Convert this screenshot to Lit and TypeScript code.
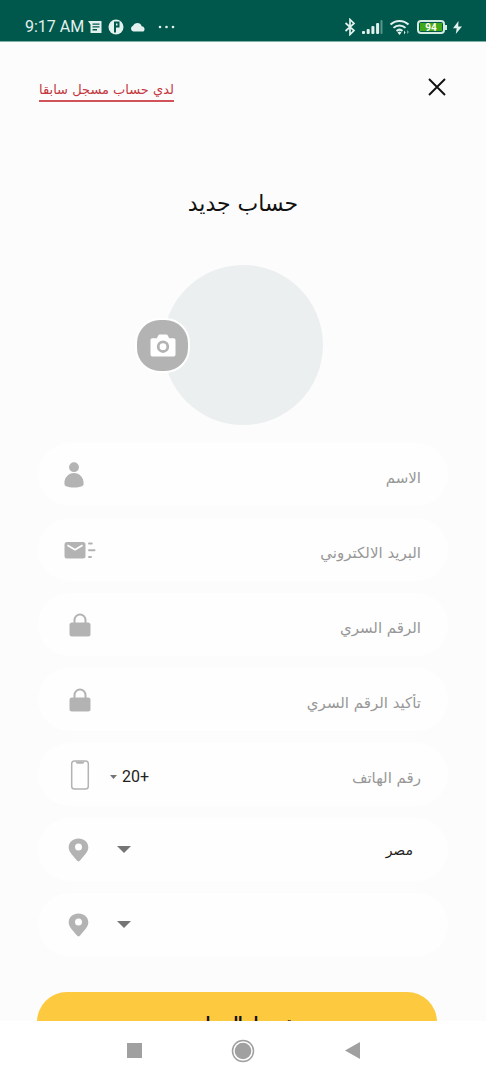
import { LitElement, html, css, svg } from "lit";
import { customElement, state } from "lit/decorators.js";

const icons = {
  person: html`<svg width="32" height="26" viewBox="0 0 32 26" aria-hidden="true">
    <circle cx="10" cy="5.2" r="4.9" />
    <path d="M10 11c5.600 0 9.600 4.500 9.600 10 0 2.200-.4 2.700-1.700 3.200-2.200.9-5 1.300-7.900 1.300s-5.700-.4-7.900-1.300C.8 23.700.4 23.200.4 21 .4 15.500 4.400 11 10 11z" />
  </svg>`,
  mail: html`<svg width="32" height="18" viewBox="0 0 32 18" aria-hidden="true">
    <rect x="0.500" y="1" width="21" height="16.500" rx="2.500" />
    <path d="M3.500 4.300 11 8.800l7.500-4.500" fill="none" stroke="#fff" stroke-width="1.800" />
    <path d="M25 2.500h2.800M25 9.200h5.500M25 16h2" fill="none" stroke="#b3b3b3" stroke-width="2" stroke-linecap="round" />
  </svg>`,
  lock: html`<svg width="32" height="24" viewBox="0 0 32 24" aria-hidden="true">
    <rect x="5.500" y="9.500" width="21" height="14" rx="2.500" />
    <path d="M10.500 10V7.200a5.500 5.700 0 0 1 11 0V10" fill="none" stroke="#b3b3b3" stroke-width="2" />
  </svg>`,
  phone: html`<svg width="32" height="32" viewBox="0 0 32 32" aria-hidden="true">
    <rect x="7.700" y="2" width="16.600" height="28" rx="2.800" fill="none" stroke="#b3b3b3" stroke-width="1.500" />
    <path d="M11.500 2.500c.5 1.800 1 2.200 2.200 2.200h4.600c1.200 0 1.700-.4 2.200-2.200z" />
  </svg>`,
  pin: html`<svg width="32" height="24" viewBox="0 0 32 24" aria-hidden="true">
    <path fill-rule="evenodd" d="M14.500.6c5.500 0 9.800 3.900 9.800 8.800 0 4.200-3.800 7.300-7.800 12.700-1.400 1.900-2.600 1.900-4 0C8.500 16.700 4.700 13.600 4.700 9.400c0-4.900 4.300-8.800 9.800-8.800zm0 4.900a3.500 3.500 0 1 0 0 7 3.500 3.500 0 0 0 0-7z" />
  </svg>`,
};

const caret = (w: number, h: number) => html`<svg class="caret" width=${w} height=${h} viewBox="0 0 12 6" preserveAspectRatio="none" aria-hidden="true">
  <path d="M0 0h12L6 6z" />
</svg>`;

@customElement("phone-status-bar")
class PhoneStatusBar extends LitElement {
  static styles = css`
    :host {
      display: flex;
      justify-content: space-between;
      align-items: center;
      box-sizing: border-box;
      height: 42px;
      padding: 13px 24px 0 25px;
      background: #00574b;
      border-bottom: 1px solid #7fb0a8;
      color: #e2f1ee;
      fill: currentColor;
      font: 16px/20px Roboto, sans-serif;
    }
    .group { display: flex; align-items: center; gap: 6px; }
    .left { gap: 4px; }
    .battery {
      display: flex;
      align-items: center;
    }
    .cell {
      box-sizing: border-box;
      width: 28px;
      height: 14px;
      padding: 1px;
      border: 2px solid #d3ebe0;
      border-radius: 4px;
      background: #00574b;
    }
    .level {
      display: block;
      height: 8px;
      background: #43a818;
      color: #fff;
      font: bold 10px/9px Roboto, sans-serif;
      text-align: center;
    }
    .tip { width: 2px; height: 5px; background: #d3ebe0; }
  `;

  render() {
    return html`
      <div class="group left">
        <span>9:17 AM</span>
        <svg width="15" height="12" viewBox="0 0 15 12"><path fill-rule="evenodd" d="M0 0h13.500v12H2.500V3.500zM4.500 2.500v1.300h7V2.500zm0 2.800v1.300h7V5.300zm0 2.800v1.300h4.500V8.100z" /></svg>
        <svg width="19" height="16" viewBox="-1 0 19 16"><circle cx="8" cy="8" r="7.500" /><path d="M7 2.500v11M7 3.500h3.500v4H7" fill="none" stroke="#00574b" stroke-width="2" /><path d="M3 3.500h3v5H3z" opacity=".5" /></svg>
        <svg width="16" height="10" viewBox="0 0 16 10"><path d="M3.200 9.500a3 3 0 0 1-.3-5.700A4.800 4.800 0 0 1 11.700 4.200 3 3 0 0 1 13.500 9.500z" /></svg>
        <svg width="32" height="4" viewBox="0 0 32 4"><circle cx="10" cy="2" r="1.300" /><circle cx="16.500" cy="2" r="1.300" /><circle cx="23" cy="2" r="1.300" /></svg>
      </div>
      <div class="group">
        <svg width="12" height="18" viewBox="0 0 12 18"><path d="M1.500 5 10 12.500 6 16.500V1.500l4 4L1.500 13" fill="none" stroke="currentColor" stroke-width="1.700" /></svg>
        <svg width="21" height="14" viewBox="0 0 21 14">
          ${[3, 5, 8, 11].map((h, i) => svg`<rect x=${i * 4.700} y=${14 - h} width="3" height=${h} rx="1" />`)}
          <rect x="18.500" y="0" width="2" height="14" rx="1" opacity=".4" />
        </svg>
        <svg width="22" height="16" viewBox="0 0 22 16">
          <path d="M1.500 5.500a13 13 0 0 1 18 0M4.500 8.900a8.700 8.700 0 0 1 12 0M7.500 12a4.500 4.500 0 0 1 6 0" fill="none" stroke="currentColor" stroke-width="2" />
          <path d="M8.500 13.500 10.500 16l2-2.500a3 3 0 0 0-4 0zM15 11.500l1.500 2-1.500 2zM18.500 11l1 2-1 2z" />
        </svg>
        <span class="battery"><span class="cell"><span class="level">94</span></span><span class="tip"></span></span>
        <svg width="9" height="13" viewBox="0 0 9 13"><path d="M5.500 0 0 7.300h3.700L2.800 13 9 5.500H5.200z" /></svg>
      </div>
    `;
  }
}

@customElement("phone-nav-bar")
class PhoneNavBar extends LitElement {
  static styles = css`
    :host {
      display: flex;
      justify-content: center;
      align-items: center;
      gap: 84px;
      height: 59px;
      background: #fff;
    }
    button {
      display: flex;
      justify-content: center;
      align-items: center;
      width: 25px;
      height: 25px;
      padding: 0;
      border: 0;
      background: none;
      fill: #a0a0a0;
    }
  `;

  render() {
    return html`
      <button aria-label="Recents"><svg width="15" height="15" viewBox="0 0 15 15"><rect width="15" height="15" /></svg></button>
      <button aria-label="Home"><svg width="24" height="24" viewBox="0 0 24 24"><circle cx="12" cy="12" r="10.500" fill="none" stroke="#a0a0a0" stroke-width="1.500" /><circle cx="12" cy="12" r="8.300" /></svg></button>
      <button aria-label="Back"><svg width="15" height="17" viewBox="0 0 15 17"><path d="M0 8.500 15 0v17z" /></svg></button>
    `;
  }
}

@customElement("app-root")
class AppRoot extends LitElement {
  @state() private country = "eg";

  static styles = css`
    :host {
      display: flex;
      flex-direction: column;
      height: 100vh;
      background: #fcfcfc;
      color: #111;
      font-family: "DejaVu Sans", sans-serif;
    }
    main {
      flex: 1;
      min-height: 0;
      overflow: hidden;
      direction: rtl;
    }
    header {
      display: flex;
      justify-content: space-between;
      align-items: flex-start;
      padding: 33px 37px 0 39px;
    }
    .close {
      display: flex;
      padding: 3px;
      border: 0;
      background: none;
    }
    .login {
      padding-top: 5px;
      border-bottom: 2px solid #cf5358;
      color: #c4383f;
      font-size: 13px;
      line-height: 20px;
      text-decoration: none;
    }
    h1 {
      margin: 86px 0 0;
      font-size: 22px;
      font-weight: 400;
      line-height: 32px;
      text-align: center;
    }
    .avatar {
      position: relative;
      width: 160px;
      height: 160px;
      margin: 45px auto 0;
      border-radius: 50%;
      background: #ebeff0;
    }
    .camera {
      position: absolute;
      left: -28px;
      top: 53px;
      display: flex;
      justify-content: center;
      align-items: center;
      width: 55px;
      height: 55px;
      padding: 0;
      border: 2px solid #fff;
      border-radius: 25px;
      background: #b3b3b3;
    }
    form {
      display: flex;
      flex-direction: column;
      gap: 12px;
      margin-top: 18px;
      padding: 0 38px;
    }
    .field {
      display: flex;
      align-items: center;
      height: 63px;
      box-sizing: border-box;
      padding: 0 27px 0 26px;
      border-radius: 32px;
      background: #fefefe;
    }
    .icon {
      display: flex;
      width: 32px;
      fill: #b3b3b3;
    }
    input,
    select {
      flex: 1;
      min-width: 0;
      margin: 0;
      padding: 0;
      border: 0;
      outline: 0;
      background: none;
      appearance: none;
      color: #222;
      font-family: inherit;
      font-size: 15px;
      line-height: 24px;
    }
    input { padding-top: 6px; }
    input::placeholder { color: #989898; opacity: 1; }
    .place { padding-right: 8px; font-size: 14px; }
    .caret { margin-left: 21px; fill: #757575; }
    .code {
      display: flex;
      align-items: center;
      direction: ltr;
      gap: 5px;
      margin-left: 14px;
      padding-top: 4px;
    }
    .code .caret { margin: 0; }
    .code select { font: 16px/20px Roboto, sans-serif; }
    .submit {
      height: 63px;
      margin: 24px 11px 0 -1px;
      padding: 0 0 4px 10px;
      border: 0;
      border-radius: 30px;
      background: #fdc93f;
      color: #111;
      font-family: inherit;
      font-size: 13px;
      font-weight: 700;
    }
  `;

  private input(id: string, type: string, text: string, icon: unknown, extra: unknown = "") {
    return html`
      <div class="field">
        <input id=${id} type=${type} placeholder=${text} aria-label=${text} dir="rtl" />
        ${extra}
        <label class="icon" for=${id}>${icon}</label>
      </div>
    `;
  }

  render() {
    return html`
      <phone-status-bar></phone-status-bar>
      <main>
        <header>
          <button class="close" aria-label="إغلاق">
            <svg width="18" height="18" viewBox="0 0 18 18"><path d="M1 1l16 16M17 1 1 17" stroke="#111" stroke-width="1.900" /></svg>
          </button>
          <a class="login" href="#login">لدي حساب مسجل سابقا</a>
        </header>
        <h1>حساب جديد</h1>
        <div class="avatar">
          <button class="camera" aria-label="إضافة صورة">
            <svg width="26" height="24" viewBox="0 0 26 24">
              <path fill="#fff" d="M2.500 4.200h4.300l1.300-2.500c.4-.8.900-1.200 1.700-1.200h6.400c.8 0 1.300.4 1.700 1.200l1.300 2.500h4.300c1.300 0 2 .8 2 2v14.300c0 1.300-.7 2-2 2h-21c-1.300 0-2-.7-2-2V6.200c0-1.200.7-2 2-2z" />
              <circle cx="13" cy="12.700" r="4.800" fill="#fff" stroke="#b3b3b3" stroke-width="2.800" />
            </svg>
          </button>
        </div>
        <form @submit=${(e: Event) => e.preventDefault()}>
          ${this.input("name", "text", "الاسم", icons.person)}
          ${this.input("email", "email", "البريد الالكتروني", icons.mail)}
          ${this.input("password", "password", "الرقم السري", icons.lock)}
          ${this.input("confirm", "password", "تأكيد الرقم السري", icons.lock)}
          ${this.input("phone", "tel", "رقم الهاتف", icons.phone, html`
            <span class="code">
              ${caret(7, 4)}
              <select aria-label="رمز الدولة"><option>20+</option></select>
            </span>
          `)}
          <div class="field">
            <select class="place" id="country" aria-label="الدولة" .value=${this.country}
              @change=${(e: Event) => (this.country = (e.target as HTMLSelectElement).value)}>
              <option value="eg">مصر</option>
            </select>
            ${caret(14, 7)}
            <label class="icon" for="country">${icons.pin}</label>
          </div>
          <div class="field">
            <select class="place" id="city" aria-label="المدينة"><option></option></select>
            ${caret(14, 7)}
            <label class="icon" for="city">${icons.pin}</label>
          </div>
          <button class="submit">تسجيل الحساب</button>
        </form>
      </main>
      <phone-nav-bar></phone-nav-bar>
    `;
  }
}
